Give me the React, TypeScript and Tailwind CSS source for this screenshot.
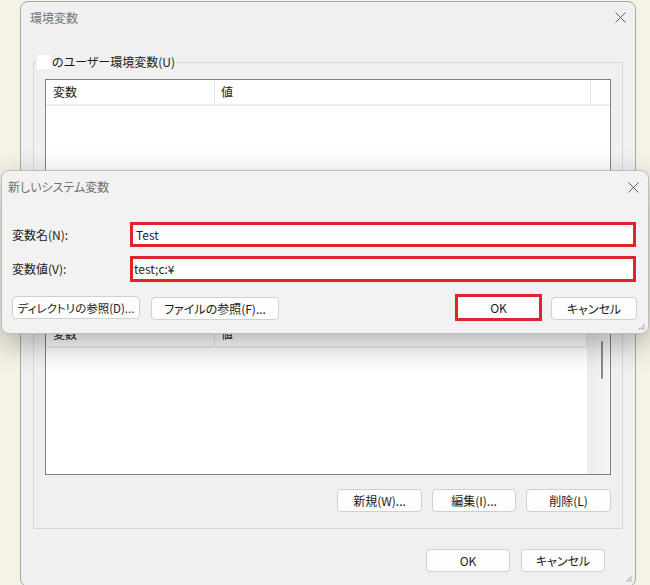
import React from "react";

const font = "font-['Noto_Sans_CJK_JP','Noto_Sans',sans-serif] [font-feature-settings:'palt']";

function CloseIcon() {
  return (
    <svg width="11" height="11" viewBox="0 0 11 11">
      <path d="M0.5 0.5 L10.5 10.5 M10.5 0.5 L0.5 10.5" stroke="#5a5a5a" strokeWidth="1" fill="none" />
    </svg>
  );
}

function Grip() {
  return (
    <svg width="7" height="7" viewBox="0 0 7 7">
      <rect x="5" y="1" width="1.5" height="1.5" fill="#b5b5b5" />
      <rect x="3" y="3" width="1.5" height="1.5" fill="#b5b5b5" />
      <rect x="5" y="3" width="1.5" height="1.5" fill="#b5b5b5" />
      <rect x="1" y="5" width="1.5" height="1.5" fill="#b5b5b5" />
      <rect x="3" y="5" width="1.5" height="1.5" fill="#b5b5b5" />
      <rect x="5" y="5" width="1.5" height="1.5" fill="#b5b5b5" />
    </svg>
  );
}

function Btn({ children, w, extra = "text-[12px]" }: { children?: React.ReactNode; w: string; extra?: string }) {
  return (
    <button
      className={`${w} h-[23px] shrink-0 whitespace-nowrap rounded-[4px] border border-[#d0d0d0] bg-[#fdfdfd] px-0 leading-[16px] text-[#1b1b1b] ${extra}`}
    >
      {children}
    </button>
  );
}

function ListView({ bodyH, scroll }: { bodyH: string; scroll?: boolean }) {
  return (
    <div className="flex border border-[#7f7f7f] bg-white">
      <div className="flex flex-1 flex-col">
        <div className="flex h-[26px] items-center border-b-2 border-[#eeeeee] text-[12px] leading-[16px] text-[#1b1b1b]">
          <div className="flex h-full w-[169px] items-center border-r border-[#e6e6e6] pl-[7px]">変数</div>
          <div className="flex h-full flex-1 items-center border-r border-[#e6e6e6] pl-[6px]">値</div>
          {!scroll && <div className="w-[19px]" />}
        </div>
        <div className={`${bodyH} bg-white`} />
      </div>
      {scroll && (
        <div className="flex w-[23px] justify-center bg-gradient-to-r from-[#ececec] to-[#f6f6f6] pl-[6px]">
          <div className="mt-[19px] h-[38px] w-[2px] rounded-full bg-[#8a8a8a]" />
        </div>
      )}
    </div>
  );
}

export default function App() {
  return (
    <div className={`relative h-[585px] w-[650px] overflow-hidden bg-[#f5f2e6] ${font}`}>
      {/* 環境変数 window */}
      <div className="absolute left-[20px] top-[1px] flex h-[586px] w-[616px] flex-col rounded-lg border border-[#a9a9a9] bg-[#f0f0f0]">
        <div className="flex h-[30px] items-center justify-between pl-[9px] pr-[9px] pt-[1px]">
          <span className="text-[12px] leading-[16px] text-[#747474]">環境変数</span>
          <CloseIcon />
        </div>

        {/* ユーザー環境変数 (下半分はダイアログの下) */}
        <fieldset className="mx-[12px] mt-[22px] border border-[#d8d8d8]">
          <legend className="ml-[2px] flex items-center px-[1px] text-[12px] leading-[16px] text-[#1b1b1b]">
            <span className="mr-[1px] inline-block h-[14px] w-[14px] bg-white" />
            のユーザー環境変数(U)
          </legend>
          <div className="px-[11px] pb-[14px]">
            <div className="mt-[9px]">
              <ListView bodyH="h-[125px]" />
            </div>
            <div className="mt-[15px] flex justify-end gap-[10px]">
              <Btn w="w-[85px]" />
              <Btn w="w-[84px]" />
              <Btn w="w-[85px]" />
            </div>
          </div>
        </fieldset>

        {/* システム環境変数 */}
        <fieldset className="mx-[12px] mt-[12px] border border-[#d8d8d8]">
          <legend className="ml-[2px] h-[16px] w-[110px] px-[1px]" />
          <div className="px-[11px] pb-[16px]">
            <div className="mt-[8px]">
              <ListView bodyH="h-[126px]" scroll />
            </div>
            <div className="mt-[14px] flex justify-end gap-[10px]">
              <Btn w="w-[85px]">新規(W)...</Btn>
              <Btn w="w-[84px]">編集(I)...</Btn>
              <Btn w="w-[85px]">削除(L)</Btn>
            </div>
          </div>
        </fieldset>

        <div className="mt-[20px] flex justify-end gap-[11px] pr-[30px]">
          <Btn w="w-[84px]">OK</Btn>
          <Btn w="w-[84px]">キャンセル</Btn>
        </div>
        <div className="absolute bottom-[4px] right-[3px]">
          <Grip />
        </div>
      </div>

      {/* 新しいシステム変数 dialog */}
      <div className="absolute left-[1px] top-[170px] flex h-[164px] w-[648px] flex-col rounded-lg border border-[#bdbdbd] bg-[#f2f2f2] shadow-[0_10px_30px_rgba(0,0,0,0.3)]">
        <div className="flex h-[32px] items-center justify-between pl-[6px] pr-[9px]">
          <span className="text-[12px] leading-[16px] text-[#6e6e6e]">新しいシステム変数</span>
          <CloseIcon />
        </div>
        <div className="mt-[19px] flex items-center pl-[10px] pr-[12px]">
          <span className="w-[118px] text-[12px] leading-[16px] text-[#1b1b1b]">変数名(N):</span>
          <div className="flex h-[25px] flex-1 items-center border-[3px] border-[#e0242b] bg-white pl-[3px] text-[12px] leading-[16px] text-[#1b1b1b]">
            Test
          </div>
        </div>
        <div className="mt-[9px] flex items-center pl-[10px] pr-[12px]">
          <span className="w-[118px] text-[12px] leading-[16px] text-[#1b1b1b]">変数値(V):</span>
          <div className="flex h-[26px] flex-1 items-center border-[3px] border-[#e0242b] bg-white pl-[1px] text-[12px] leading-[16px] text-[#1b1b1b]">
            test;c:¥
          </div>
        </div>
        <div className="mt-[12px] flex items-center pl-[10px] pr-[11px]">
          <Btn w="w-[128px]" extra="text-[11.5px]">ディレクトリの参照(D)...</Btn>
          <div className="ml-[11px]">
            <Btn w="w-[128px]">ファイルの参照(F)...</Btn>
          </div>
          <div className="flex-1" />
          <button className="h-[27px] w-[87px] border-[3px] border-[#e0242b] bg-[#fdfdfd] text-[12px] leading-[16px] text-[#1b1b1b]">
            OK
          </button>
          <div className="ml-[9px]">
            <Btn w="w-[86px]">キャンセル</Btn>
          </div>
        </div>
        <div className="absolute bottom-[3px] right-[3px]">
          <Grip />
        </div>
      </div>
    </div>
  );
}
